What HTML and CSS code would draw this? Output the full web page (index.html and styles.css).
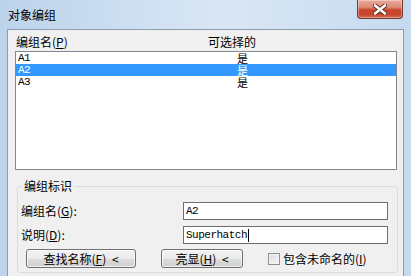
FILE: index.html
```html
<!DOCTYPE html>
<html>
<head>
<meta charset="utf-8">
<link rel="stylesheet" href="styles.css">
</head>
<body>
<div class="window">
  <div class="titlebar">
    <span class="title">对象编组</span>
    <div class="close">
      <svg width="14" height="11" viewBox="0 0 14 11">
        <path d="M2 1.5 L12 9.5 M12 1.5 L2 9.5" stroke="#5a2a20" stroke-width="4.4" stroke-linecap="round"/>
        <path d="M2 1.5 L12 9.5 M12 1.5 L2 9.5" stroke="#ffffff" stroke-width="2.6" stroke-linecap="round"/>
      </svg>
    </div>
  </div>
  <div class="frame">
    <div class="client">
      <div class="list-head">
        <span class="h1">编组名(<u>P</u>)</span>
        <span class="h2">可选择的</span>
      </div>
      <div class="list">
        <div class="row"><span class="c1">A1</span><span class="c2">是</span></div>
        <div class="row sel"><span class="c1">A2</span><span class="c2">是</span></div>
        <div class="row"><span class="c1">A3</span><span class="c2">是</span></div>
      </div>
      <fieldset class="group">
        <legend>编组标识</legend>
        <div class="field">
          <span class="lbl">编组名(<u>G</u>):</span>
          <div class="input">A2</div>
        </div>
        <div class="field">
          <span class="lbl">说明(<u>D</u>):</span>
          <div class="input">Superhatch<span class="caret"></span></div>
        </div>
        <div class="buttons">
          <button class="btn btn-find">查找名称(<u>F</u>) &lt;</button>
          <button class="btn btn-hl">亮显(<u>H</u>) &lt;</button>
          <span class="check"><span class="box"></span>包含未命名的(<u>I</u>)</span>
        </div>
      </fieldset>
    </div>
  </div>
</div>
</body>
</html>
```

FILE: styles.css
```css
html, body {
  margin: 0;
  padding: 0;
}
body {
  width: 411px;
  height: 276px;
  overflow: hidden;
  font-family: "Noto Sans CJK SC", "Liberation Sans", sans-serif;
  font-size: 12px;
  color: #000;
}
.window {
  width: 411px;
  height: 276px;
  display: flex;
  flex-direction: column;
  background: linear-gradient(90deg, #bcd3eb 0%, #cfe0f2 35%, #d9e7f5 55%, #c6daef 100%);
}
.titlebar {
  height: 29px;
  display: flex;
  justify-content: space-between;
  align-items: flex-start;
  flex-shrink: 0;
}
.title {
  margin: 8px 0 0 8px;
  line-height: 14px;
  font-size: 12px;
}
.close {
  width: 44px;
  height: 18px;
  margin-right: 8px;
  border: 1px solid #6d3a34;
  border-top: none;
  border-radius: 0 0 4px 4px;
  background: linear-gradient(180deg, #e9a99b 0%, #dc8b77 40%, #c9462c 55%, #c7462d 80%, #d86a4c 100%);
  display: flex;
  align-items: center;
  justify-content: center;
  box-shadow: inset 0 0 0 1px rgba(255,255,255,0.35);
}
.frame {
  flex: 1;
  display: flex;
  padding: 0 7px;
  min-height: 0;
}
.client {
  flex: 1;
  border: 1px solid #8d9db1;
  border-bottom: none;
  background: #f0f0f0;
  display: flex;
  flex-direction: column;
}
.list-head {
  display: flex;
  height: 21px;
  padding: 6px 0 0 8px;
  box-sizing: border-box;
  line-height: 12px;
}
.h1 {
  width: 192px;
}
.list {
  margin: 0 6px 0 7px;
  height: 119px;
  box-sizing: border-box;
  border: 1px solid #828790;
  background: #fff;
}
.row {
  display: flex;
  height: 12px;
  line-height: 12px;
  padding-left: 2px;
}
.row.sel {
  background: #3399ff;
  color: #fff;
}
.c1 {
  width: 219px;
  font-family: "Liberation Mono", monospace;
  font-size: 11px;
  letter-spacing: -0.5px;
}
.c2 {
  font-size: 11px;
  line-height: 12px;
}
.group {
  margin: 10px 5px 0 9px;
  padding: 10px 9px 4px 3px;
  border: 1px solid #d5dfe5;
  border-radius: 3px;
  min-width: 0;
}
.group legend {
  margin-left: 1px;
  padding: 0 2px;
  line-height: 12px;
  font-size: 12px;
}
.field {
  display: flex;
  align-items: center;
  height: 18px;
  margin-bottom: 6px;
}
.lbl {
  flex: 1;
  line-height: 12px;
}
.input {
  width: 205px;
  height: 18px;
  box-sizing: border-box;
  border: 1px solid #6e6e6e;
  background: #fff;
  padding: 0 2px;
  display: flex;
  align-items: center;
  font-family: "Liberation Mono", monospace;
  font-size: 11px;
  letter-spacing: -0.5px;
}
.caret {
  width: 1px;
  height: 13px;
  background: #000;
  margin-left: 1px;
}
.buttons {
  display: flex;
  align-items: center;
  margin-top: -1px;
  padding-left: 5px;
}
.btn {
  height: 19px;
  box-sizing: border-box;
  border: 1px solid #707070;
  border-radius: 3px;
  background: linear-gradient(180deg, #f2f2f2 0%, #ebebeb 50%, #dddddd 51%, #cfcfcf 100%);
  font-family: "Noto Sans CJK SC", sans-serif;
  font-size: 12px;
  line-height: 12px;
  padding: 0;
  color: #000;
  word-spacing: 3px;
  box-shadow: inset 0 0 0 1px rgba(255,255,255,0.7);
}
.btn-find {
  width: 110px;
}
.btn-hl {
  width: 82px;
  margin-left: 25px;
}
.check {
  display: flex;
  align-items: center;
  margin-left: 25px;
  line-height: 12px;
}
.box {
  width: 12px;
  height: 12px;
  box-sizing: border-box;
  border: 1px solid #8f8f8f;
  background: linear-gradient(135deg, #dcdcdc 0%, #f4f4f4 100%);
  box-shadow: inset 0 0 0 1px #f4f4f4;
  margin-right: 3px;
}
```
